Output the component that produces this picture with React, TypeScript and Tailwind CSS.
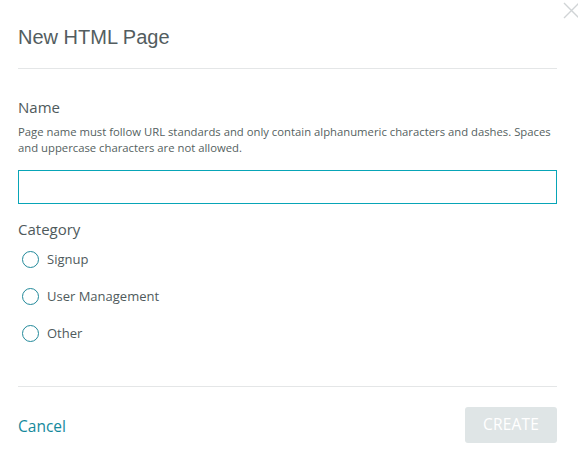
import React from "react";

function Radio({ label }: { label: string }) {
  return (
    <label className="flex items-center h-[37px]">
      <span className="ml-[4px] w-[17px] h-[17px] rounded-full border-[1.5px] border-[#22899a] bg-white" />
      <span className="ml-[8px] text-[13px] text-[#4f5a5c]">{label}</span>
    </label>
  );
}

export default function App() {
  return (
    <div
      className="relative w-[578px] h-[472px] bg-white overflow-hidden"
      style={{ fontFamily: '"Open Sans", "Liberation Sans", sans-serif' }}
    >
      <button className="absolute right-[-2px] top-[2px] text-[#d0d4d6]">
        <svg width="17" height="17" viewBox="0 0 17 17" fill="none" stroke="currentColor" strokeWidth="1.4">
          <path d="M1 1 L16 16 M16 1 L1 16" />
        </svg>
      </button>

      <div className="px-[18px] pr-[21px]">
        <div className="h-[69px] border-b border-[#e4e6e7] flex items-center pt-[6px]">
          <h1
            className="text-[20px] text-[#535d60]"
            style={{ fontFamily: '"Liberation Sans", Arial, sans-serif' }}
          >
            New HTML Page
          </h1>
        </div>

        <div className="pt-[28px]">
          <div className="text-[15px] leading-[20px] text-[#4f5a5c]">Name</div>
          <p className="mt-[7px] text-[11.3px] leading-[16px] text-[#555f61]">
            Page name must follow URL standards and only contain alphanumeric characters and dashes. Spaces and uppercase characters are not allowed.
          </p>
          <input
            className="mt-[14px] block w-full h-[34px] border border-[#08a5b7] outline-none px-2"
            type="text"
          />
          <div className="mt-[15px] text-[15px] leading-[20px] text-[#4f5a5c]">Category</div>
          <div className="mt-[2px] flex flex-col">
            <Radio label="Signup" />
            <Radio label="User Management" />
            <Radio label="Other" />
          </div>
        </div>

        <div className="mt-[34px] border-t border-[#e4e6e7] pt-[20px] flex items-center justify-between">
          <a className="mt-[3px] text-[15.5px] text-[#14899c]">Cancel</a>
          <button className="w-[92px] h-[36px] rounded-[3px] bg-[#dfe5e6] text-white text-[15.5px] tracking-[0.2px]">
            CREATE
          </button>
        </div>
      </div>
    </div>
  );
}
